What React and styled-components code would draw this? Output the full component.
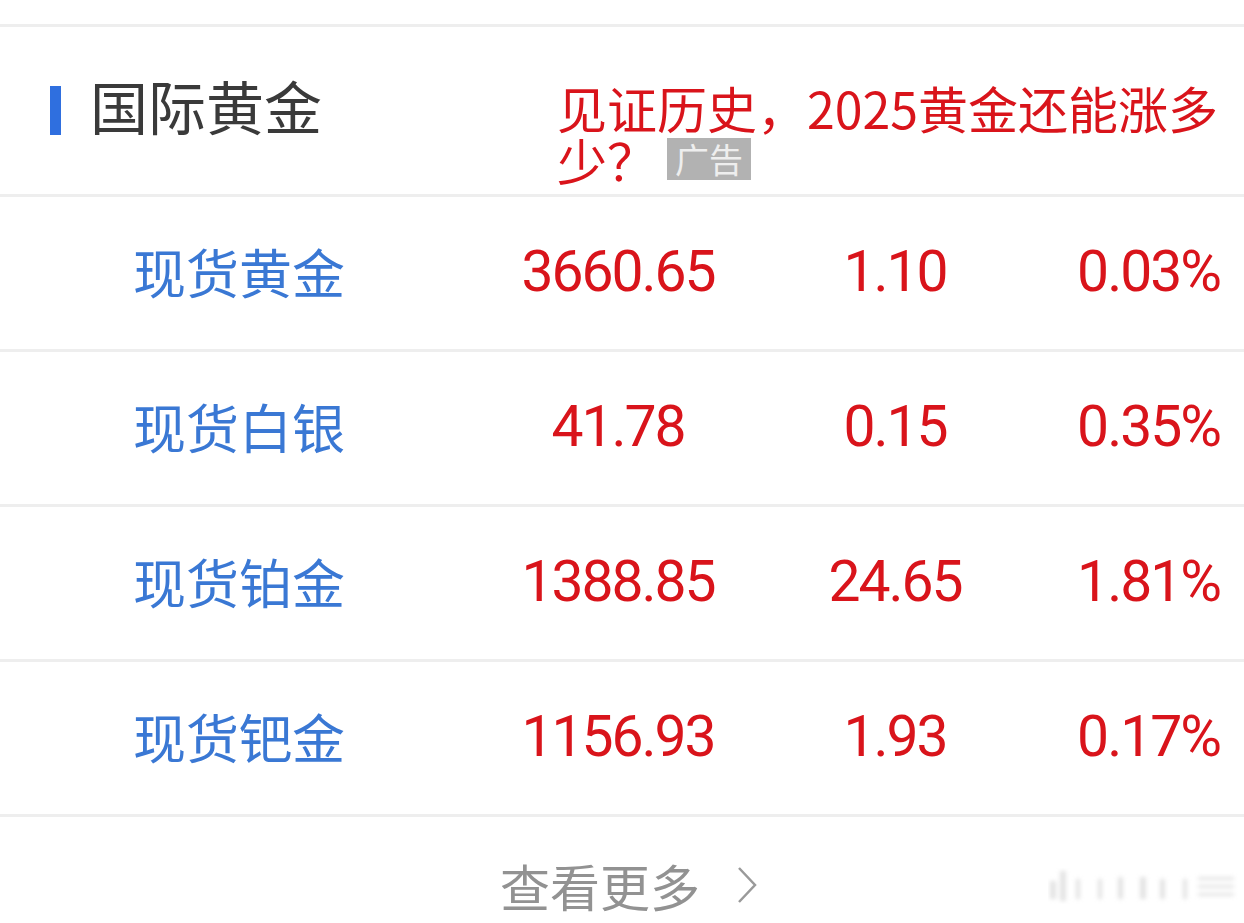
import React from 'react'
import styled, { createGlobalStyle } from 'styled-components'

const GlobalStyle = createGlobalStyle`
  body {
    margin: 0;
    background: #ffffff;
    font-family: "Noto Sans CJK SC", "Noto Sans", sans-serif;
  }
`

const Page = styled.div`
  width: 1244px;
  height: 923px;
  overflow: hidden;
  position: relative;
  padding-top: 24px;
  box-sizing: border-box;
  background: #fff;
`

const Header = styled.div`
  display: flex;
  align-items: flex-start;
  height: 167px;
  border-top: 3px solid #eeeeee;
  border-bottom: 3px solid #eeeeee;
`

const TitleWrap = styled.div`
  display: flex;
  align-items: center;
  margin-top: 43px;
  padding-left: 50px;
  width: 507px;
  flex-shrink: 0;
`

const TitleBar = styled.span`
  width: 11px;
  height: 49px;
  background: #2f6fdf;
  margin-right: 29px;
  margin-top: 10px;
`

const Title = styled.h2`
  margin: 0;
  font-size: 58px;
  font-weight: 400;
  line-height: 70px;
  color: #3a3a3a;
`

const Ad = styled.div`
  margin-top: 54px;
  width: 670px;
  font-size: 50px;
  line-height: 52px;
  color: #d9141b;
`

const AdTag = styled.span`
  display: inline-block;
  vertical-align: top;
  margin-left: 10px;
  margin-top: 5px;
  width: 84px;
  height: 42px;
  line-height: 42px;
  text-align: center;
  font-size: 34px;
  background: #b2b2b2;
  color: #eeeeee;
`

const Row = styled.div`
  display: grid;
  grid-template-columns: 470px 296px 258px 1fr;
  align-items: center;
  height: 155px;
  padding-bottom: 4px;
  box-sizing: border-box;
  border-bottom: 3px solid #eeeeee;
`

const Name = styled.div`
  padding-left: 133px;
  font-size: 53px;
  color: #3a78d4;
`

const Num = styled.div`
  font-family: Roboto, "Noto Sans", sans-serif;
  font-weight: 400;
  font-size: 57px;
  letter-spacing: -2px;
  color: #d9141b;
  text-align: ${({ $right }) => ($right ? 'right' : 'center')};
  padding-right: ${({ $right }) => ($right ? '24px' : '0')};
`

const Footer = styled.div`
  display: flex;
  justify-content: center;
  align-items: center;
  gap: 36px;
  padding-top: 38px;
  padding-left: 14px;
  font-size: 50px;
  line-height: 60px;
  color: #929292;
`

const Watermark = styled.svg`
  position: absolute;
  right: 6px;
  bottom: 16px;
  opacity: 0.5;
`

const rows = [
  ['现货黄金', '3660.65', '1.10', '0.03%'],
  ['现货白银', '41.78', '0.15', '0.35%'],
  ['现货铂金', '1388.85', '24.65', '1.81%'],
  ['现货钯金', '1156.93', '1.93', '0.17%'],
]

export default function App() {
  return (
    <Page>
      <GlobalStyle />
      <Header>
        <TitleWrap>
          <TitleBar />
          <Title>国际黄金</Title>
        </TitleWrap>
        <Ad>
          见证历史，2025黄金还能涨多少？<AdTag>广告</AdTag>
        </Ad>
      </Header>
      {rows.map(([name, price, change, pct]) => (
        <Row key={name}>
          <Name>{name}</Name>
          <Num>{price}</Num>
          <Num>{change}</Num>
          <Num $right>{pct}</Num>
        </Row>
      ))}
      <Footer>
        <span>查看更多</span>
        <svg width="22" height="38" viewBox="0 0 22 38">
          <polyline points="3,2 19,19 3,36" fill="none" stroke="#9a9a9a" strokeWidth="2.5" />
        </svg>
      </Footer>
      <Watermark width="190" height="40" viewBox="0 0 190 40">
        <defs>
          <filter id="wmblur">
            <feGaussianBlur stdDeviation="2" />
          </filter>
        </defs>
        <g fill="#c8c8c8" filter="url(#wmblur)">
          <rect x="2" y="14" width="6" height="18" />
          <rect x="12" y="4" width="6" height="30" />
          <rect x="28" y="12" width="4" height="20" />
          <rect x="50" y="12" width="4" height="20" />
          <rect x="70" y="10" width="5" height="22" />
          <rect x="92" y="10" width="6" height="22" />
          <rect x="112" y="12" width="5" height="20" />
          <rect x="135" y="12" width="4" height="20" />
          <rect x="150" y="10" width="36" height="3" />
          <rect x="150" y="18" width="36" height="3" />
          <rect x="150" y="26" width="36" height="3" />
        </g>
      </Watermark>
    </Page>
  )
}
